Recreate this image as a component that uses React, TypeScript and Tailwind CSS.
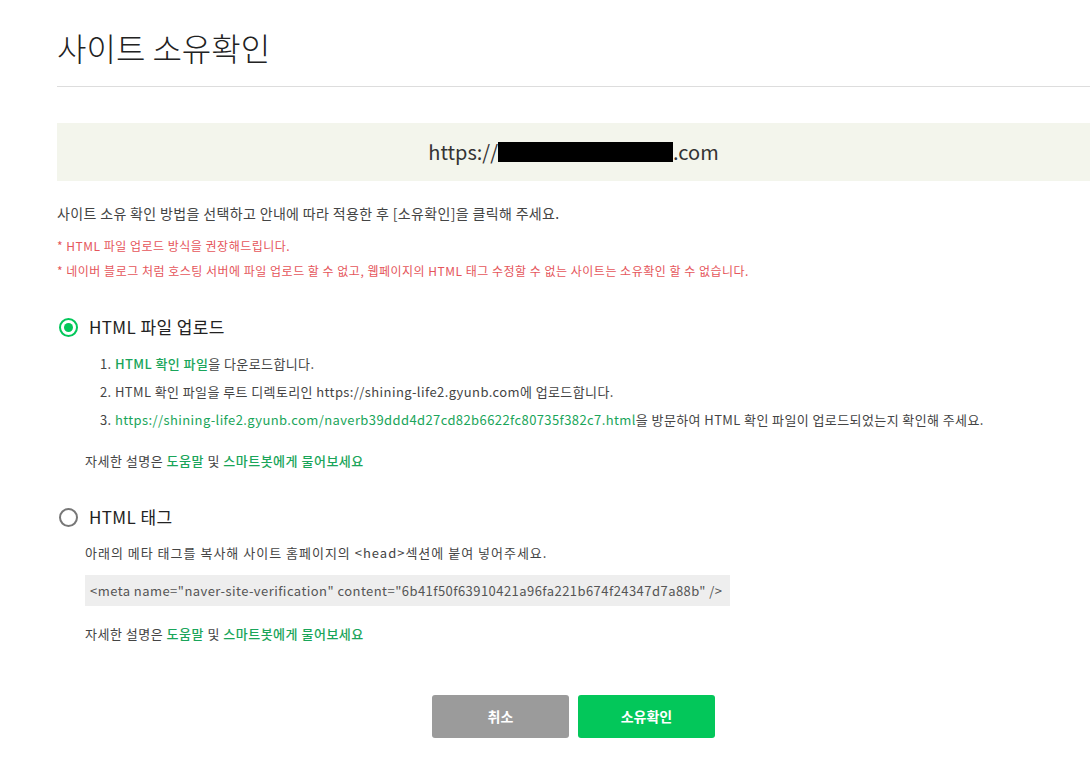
import { useState } from "react";

const green = "text-[#1aa55a]";

function Radio({ checked, label, onClick }: { checked: boolean; label: string; onClick: () => void }) {
  return (
    <button onClick={onClick} className="flex items-center gap-[11px] h-[24px] pl-[2px] text-left">
      {checked ? (
        <span className="w-[19px] h-[19px] rounded-full border-2 border-[#03c75a] flex items-center justify-center">
          <span className="w-[9px] h-[9px] rounded-full bg-[#03c75a]" />
        </span>
      ) : (
        <span className="w-[19px] h-[19px] rounded-full border-2 border-[#777]" />
      )}
      <span className="text-[17px] leading-[24px] tracking-[0.4px] text-[#222]">{label}</span>
    </button>
  );
}

function HelpLine() {
  return (
    <p className="pl-[28px] text-[13px] leading-[20px] tracking-[0.5px] text-[#444]">
      자세한 설명은 <a className={`${green} font-medium`}>도움말</a> 및{" "}
      <a className={`${green} font-medium`}>스마트봇에게 물어보세요</a>
    </p>
  );
}

export default function App() {
  const [method, setMethod] = useState("file");

  return (
    <div
      className="min-h-[758px] bg-white pl-[57px] pb-[20px]"
      style={{ fontFamily: '"Noto Sans CJK KR", "Noto Sans", sans-serif' }}
    >
      <h1 className="pt-[29px] text-[32px] leading-[36px] text-[#222] font-light">사이트 소유확인</h1>
      <div className="mt-[21px] border-t border-[#ddd]" />

      <div className="mt-[36px] h-[58px] bg-[#f3f5ec] flex items-center justify-center text-[20px] text-[#333]">
        https://<span className="inline-block w-[175px] h-[20px] bg-black" />.com
      </div>

      <p className="mt-[22px] text-[14px] leading-[20px] tracking-[0.35px] text-[#444]">
        사이트 소유 확인 방법을 선택하고 안내에 따라 적용한 후 [소유확인]을 클릭해 주세요.
      </p>
      <p className="mt-[13px] text-[12px] leading-[20px] text-[#e5565b] tracking-[0.5px]">* HTML 파일 업로드 방식을 권장해드립니다.</p>
      <p className="mt-[5px] text-[12px] leading-[20px] text-[#e5565b] tracking-[0.5px]">
        * 네이버 블로그 처럼 호스팅 서버에 파일 업로드 할 수 없고, 웹페이지의 HTML 태그 수정할 수 없는 사이트는 소유확인 할 수 없습니다.
      </p>

      <div className="mt-[34px]">
        <Radio checked={method === "file"} label="HTML 파일 업로드" onClick={() => setMethod("file")} />
      </div>
      <ol className="mt-[11px] pl-[43px] text-[13px] leading-[28px] tracking-[0.4px] text-[#444]">
        <li>
          1. <a className={`${green} font-medium`}>HTML 확인 파일</a>을 다운로드합니다.
        </li>
        <li>2. HTML 확인 파일을 루트 디렉토리인 https://shining-life2.gyunb.com에 업로드합니다.</li>
        <li>
          3. <a className={green}>https://shining-life2.gyunb.com/naverb39ddd4d27cd82b6622fc80735f382c7.html</a>을 방문하여 HTML 확인 파일이 업로드되었는지 확인해 주세요.
        </li>
      </ol>
      <div className="mt-[17px]">
        <HelpLine />
      </div>

      <div className="mt-[34px]">
        <Radio checked={method === "tag"} label="HTML 태그" onClick={() => setMethod("tag")} />
      </div>
      <p className="mt-[14px] pl-[28px] text-[13px] leading-[20px] tracking-[1px] text-[#444]">
        아래의 메타 태그를 복사해 사이트 홈페이지의 &lt;head&gt;섹션에 붙여 넣어주세요.
      </p>
      <div className="mt-[12px] ml-[28px] w-[645px] h-[31px] bg-[#eeeeee] flex items-center pl-[5px] text-[13px] tracking-[0.45px] text-[#555]">
        &lt;meta name="naver-site-verification" content="6b41f50f63910421a96fa221b674f24347d7a88b" /&gt;
      </div>
      <div className="mt-[18px]">
        <HelpLine />
      </div>

      <div className="mt-[51px] flex justify-center gap-[9px]">
        <button className="w-[137px] h-[43px] rounded-[3px] bg-[#9b9b9b] text-white text-[14px] font-bold">취소</button>
        <button className="w-[137px] h-[43px] rounded-[3px] bg-[#03c75a] text-white text-[14px] font-bold">소유확인</button>
      </div>
    </div>
  );
}
